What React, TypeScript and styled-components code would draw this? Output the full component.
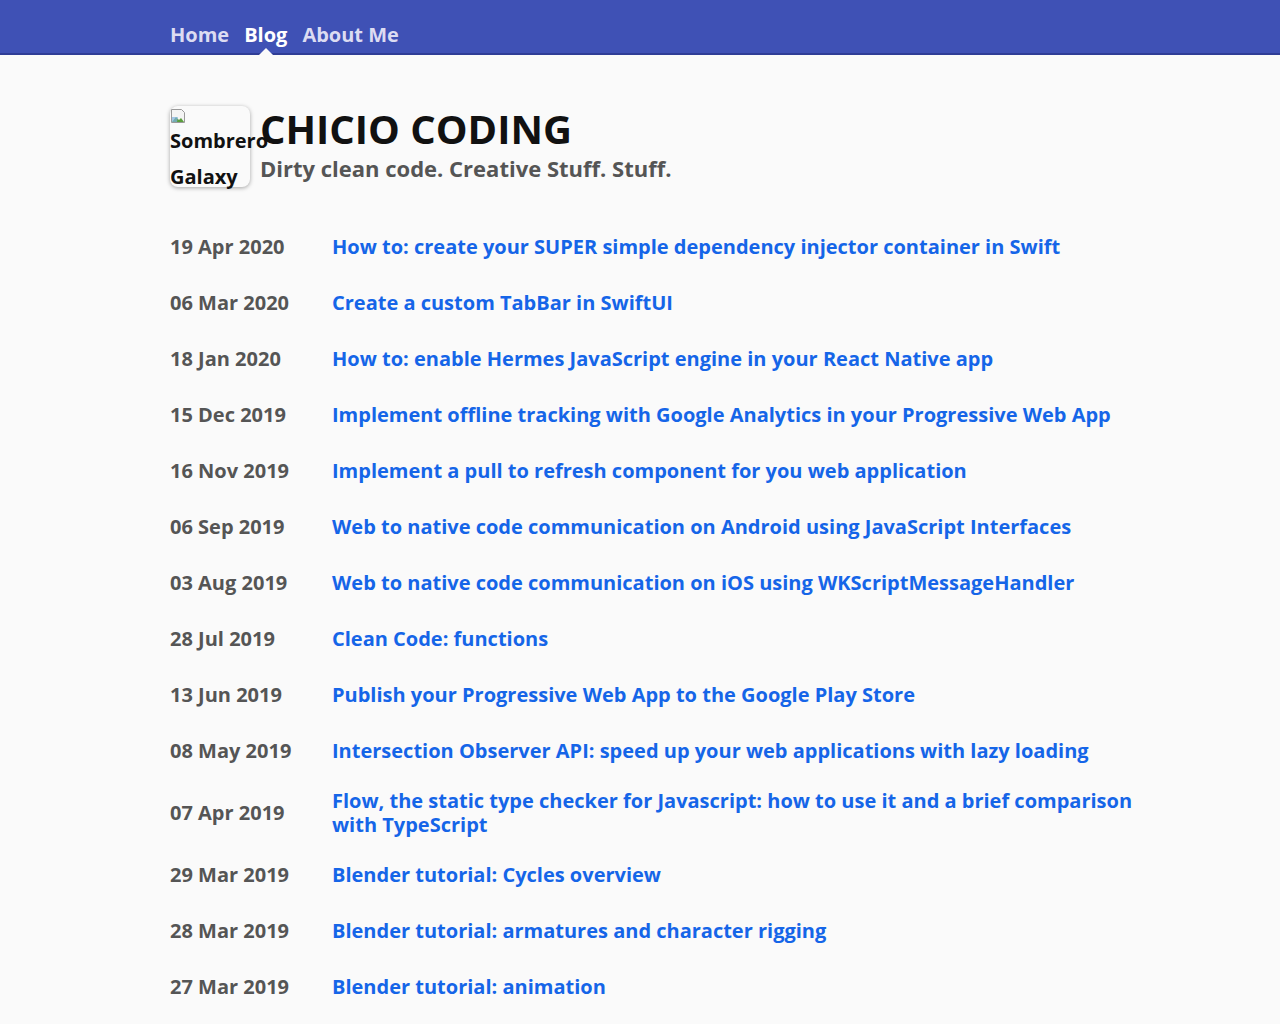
import styled, { createGlobalStyle } from 'styled-components'

const GlobalStyle = createGlobalStyle`
  html, body {
    margin: 0;
    padding: 0;
    background: #fafafa;
    font-family: "Open Sans", "Liberation Sans", sans-serif;
  }
`

const posts = [
  { date: '19 Apr 2020', title: 'How to: create your SUPER simple dependency injector container in Swift' },
  { date: '06 Mar 2020', title: 'Create a custom TabBar in SwiftUI' },
  { date: '18 Jan 2020', title: 'How to: enable Hermes JavaScript engine in your React Native app' },
  { date: '15 Dec 2019', title: 'Implement offline tracking with Google Analytics in your Progressive Web App' },
  { date: '16 Nov 2019', title: 'Implement a pull to refresh component for you web application' },
  { date: '06 Sep 2019', title: 'Web to native code communication on Android using JavaScript Interfaces' },
  { date: '03 Aug 2019', title: 'Web to native code communication on iOS using WKScriptMessageHandler' },
  { date: '28 Jul 2019', title: 'Clean Code: functions' },
  { date: '13 Jun 2019', title: 'Publish your Progressive Web App to the Google Play Store' },
  { date: '08 May 2019', title: 'Intersection Observer API: speed up your web applications with lazy loading' },
  { date: '07 Apr 2019', title: 'Flow, the static type checker for Javascript: how to use it and a brief comparison with TypeScript' },
  { date: '29 Mar 2019', title: 'Blender tutorial: Cycles overview' },
  { date: '28 Mar 2019', title: 'Blender tutorial: armatures and character rigging' },
  { date: '27 Mar 2019', title: 'Blender tutorial: animation' },
]

const NavBar = styled.nav`
  background: #3f51b5;
  border-bottom: 2px solid #2f3d96;
  height: 53px;
`

const NavInner = styled.div`
  padding: 0 170px;
  height: 100%;
  display: flex;
  align-items: flex-end;
  gap: 15px;
`

const NavLink = styled.a<{ $active?: boolean }>`
  position: relative;
  font-size: 20px;
  font-weight: 700;
  line-height: 24px;
  padding-bottom: 6px;
  color: ${(p) => (p.$active ? '#ffffff' : '#dcdcf2')};
  text-decoration: none;

  ${(p) =>
    p.$active &&
    `
    &:after {
      content: "";
      position: absolute;
      left: 50%;
      bottom: -2px;
      margin-left: -7px;
      border-left: 7px solid transparent;
      border-right: 7px solid transparent;
      border-bottom: 7px solid #fafafa;
    }
  `}
`

const Content = styled.main`
  padding: 51px 130px 0 170px;
`

const Header = styled.header`
  display: flex;
  align-items: flex-start;
  gap: 10px;
  margin-bottom: 32px;
`

const Avatar = styled.div`
  flex: 0 0 80px;
  width: 80px;
  height: 81px;
  border-radius: 8px;
  box-shadow: 0 1px 4px rgba(0, 0, 0, 0.35);
  font-size: 20px;
  font-weight: 700;
  color: #111;
  white-space: nowrap;
`

const BrokenIcon = styled.svg`
  display: block;
  margin: 2px 0 0 0;
`

const AltText = styled.div`
  line-height: 36px;
  margin-top: -1px;
`

const Titles = styled.div`
  display: flex;
  flex-direction: column;
  gap: 3px;
  margin-top: 1px;
`

const SiteTitle = styled.h1`
  margin: 0;
  font-size: 40px;
  font-weight: 700;
  line-height: 44px;
  color: #111;
`

const Subtitle = styled.h2`
  margin: 0;
  font-size: 22px;
  font-weight: 700;
  line-height: 28px;
  color: #555;
`

const PostList = styled.ul`
  list-style: none;
  margin: 0;
  padding: 0;
`

const PostRow = styled.li`
  display: flex;
  align-items: center;
  min-height: 56px;
  padding: 10px 0;
  box-sizing: border-box;
`

const PostDate = styled.span`
  flex: 0 0 162px;
  font-size: 20px;
  font-weight: 700;
  line-height: 24px;
  color: #555;
`

const PostTitle = styled.a`
  font-size: 20px;
  font-weight: 700;
  line-height: 24px;
  color: #1565e8;
  text-decoration: none;
`

export default function App() {
  return (
    <>
      <GlobalStyle />
      <NavBar>
        <NavInner>
          <NavLink href="#">Home</NavLink>
          <NavLink href="#" $active>
            Blog
          </NavLink>
          <NavLink href="#">About Me</NavLink>
        </NavInner>
      </NavBar>
      <Content>
        <Header>
          <Avatar>
            <BrokenIcon width="16" height="16" viewBox="0 0 16 16">
              <path d="M1.5 1.5h10l3 3v10h-13z" fill="#f4f4f4" stroke="#9a9a9a" />
              <path d="M2 14l4-5 3 3 2-2 3 4z" fill="#5a9e3c" />
              <path d="M2 9h6l-1 5H2z" fill="#7fb2e0" opacity="0.7" />
            </BrokenIcon>
            <AltText>
              Sombrero
              <br />
              Galaxy
            </AltText>
          </Avatar>
          <Titles>
            <SiteTitle>CHICIO CODING</SiteTitle>
            <Subtitle>Dirty clean code. Creative Stuff. Stuff.</Subtitle>
          </Titles>
        </Header>
        <PostList>
          {posts.map((post) => (
            <PostRow key={post.title}>
              <PostDate>{post.date}</PostDate>
              <PostTitle href="#">{post.title}</PostTitle>
            </PostRow>
          ))}
        </PostList>
      </Content>
    </>
  )
}
